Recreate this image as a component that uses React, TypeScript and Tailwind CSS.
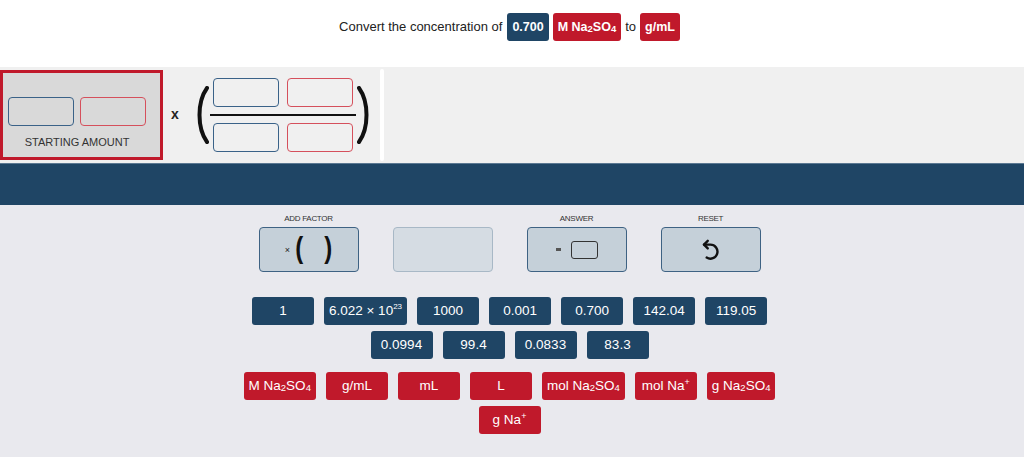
import type { ReactNode } from "react";

const font = { fontFamily: '"Liberation Sans", Arial, sans-serif' };

function Na2SO4({ prefix }: { prefix: string }) {
  return (
    <>
      {prefix} Na<sub className="text-[9.5px]">2</sub>SO<sub className="text-[9.5px]">4</sub>
    </>
  );
}

function NaPlus({ prefix }: { prefix: string }) {
  return (
    <>
      {prefix} Na<sup className="text-[9px]">+</sup>
    </>
  );
}

const numbers: ReactNode[][] = [
  [
    "1",
    <>
      6.022 × 10<sup className="text-[8px]">23</sup>
    </>,
    "1000",
    "0.001",
    "0.700",
    "142.04",
    "119.05",
  ],
  ["0.0994", "99.4", "0.0833", "83.3"],
];

const units: ReactNode[][] = [
  [
    <Na2SO4 prefix="M" />,
    "g/mL",
    "mL",
    "L",
    <Na2SO4 prefix="mol" />,
    <NaPlus prefix="mol" />,
    <Na2SO4 prefix="g" />,
  ],
  [<NaPlus prefix="g" />],
];

function Slot({ red }: { red?: boolean }) {
  return (
    <div
      className={`w-[66px] h-[29px] rounded-[4px] border ${
        red ? "border-[#d5505c]" : "border-[#3a6288]"
      }`}
    />
  );
}

function Paren({ flip }: { flip?: boolean }) {
  return (
    <svg width="13" height="58" viewBox="0 0 13 58" className={flip ? "-scale-x-100" : ""}>
      <path d="M11 2 C1 16 1 42 11 56" stroke="#111" strokeWidth="4" fill="none" strokeLinecap="round" />
    </svg>
  );
}

function Chip({ children, red }: { children: ReactNode; red?: boolean }) {
  return (
    <div
      className={`min-w-[62px] h-[28px] px-[5px] rounded-[3px] flex items-center justify-center text-white text-[13.5px] whitespace-nowrap ${
        red ? "bg-[#c0192b]" : "bg-[#1f4565]"
      }`}
    >
      {children}
    </div>
  );
}

function ActionButton({ label, children, disabled }: { label?: string; children?: ReactNode; disabled?: boolean }) {
  return (
    <div className="w-[100px] flex flex-col items-center">
      <div className="h-[9px] text-[8px] leading-[9px] text-[#333] uppercase tracking-[-0.3px]">{label}</div>
      <div
        className={`mt-[4px] w-[100px] h-[45px] rounded-[4px] border flex items-center justify-center ${
          disabled ? "bg-[#d5dce3] border-[#a8b8c6]" : "bg-[#c5d0d9] border-[#3e6283]"
        }`}
      >
        {children}
      </div>
    </div>
  );
}

export default function App() {
  return (
    <div className="w-[1024px] h-[457px] bg-[#e9e9ee] overflow-hidden" style={font}>
      {/* prompt */}
      <div className="h-[67px] bg-white flex justify-center pt-[13px] pr-[5px]">
        <div className="flex items-center gap-[4px] h-[28px] text-[13px] text-[#222]">
          <span className="mr-[1px]">Convert the concentration of</span>
          <span className="h-[28px] px-[5px] rounded-[3px] bg-[#1f4565] text-white font-bold text-[12.5px] flex items-center">0.700</span>
          <span className="h-[28px] px-[5px] rounded-[3px] bg-[#c0192b] text-white font-bold text-[12.5px] flex items-center">
            <Na2SO4 prefix="M" />
          </span>
          <span>to</span>
          <span className="h-[28px] px-[5px] rounded-[3px] bg-[#c0192b] text-white font-bold text-[12.5px] flex items-center">g/mL</span>
        </div>
      </div>

      {/* workspace */}
      <div className="h-[96px] bg-[#f0f0f0] flex items-start">
        <div className="mt-[3px] w-[163px] h-[90px] border-[3px] border-[#c0192b] bg-[#d9d9d9] flex flex-col items-center pl-[1px] pr-[10px]">
          <div className="mt-[24px] flex gap-[6px]">
            <Slot />
            <Slot red />
          </div>
          <div className="mt-[8px] text-[11px] text-[#333]">STARTING AMOUNT</div>
        </div>
        <div className="ml-[8px] mt-[37px] text-[14px] font-bold text-[#222]">x</div>
        <div className="ml-[17px] flex items-center h-[96px]">
          <Paren />
          <div className="flex flex-col items-center mx-[1px]">
            <div className="flex gap-[8px]">
              <Slot />
              <Slot red />
            </div>
            <div className="my-[7px] w-[146px] h-[2px] bg-[#111]" />
            <div className="flex gap-[8px]">
              <Slot />
              <Slot red />
            </div>
          </div>
          <Paren flip />
        </div>
        <div className="ml-[10px] mt-[2px] w-[4px] h-[92px] bg-white rounded-[2px]" />
      </div>

      {/* band */}
      <div className="h-[42px] bg-[#1f4565] border-t border-[#5b7892]" />

      {/* controls */}
      <div className="pt-[9px] pr-[5px] flex flex-col items-center">
        <div className="flex gap-[34px]">
          <ActionButton label="Add factor">
            <span className="text-[9px] text-[#222] mr-[5px] mt-[3px]">×</span>
            <span className="text-[24px] leading-none font-bold text-[#111] -mt-[3px] [transform:scaleY(1.2)]">(</span>
            <span className="w-[21px]" />
            <span className="text-[24px] leading-none font-bold text-[#111] -mt-[3px] [transform:scaleY(1.2)]">)</span>
          </ActionButton>
          <ActionButton disabled />
          <ActionButton label="Answer">
            <span className="w-[5px] h-[3px] bg-[#555] mr-[10px]" />
            <span className="w-[27px] h-[18px] rounded-[3px] border border-[#333]" />
          </ActionButton>
          <ActionButton label="Reset">
            <svg width="26" height="26" viewBox="0 0 24 24" fill="none" stroke="#111" strokeWidth="2.2" strokeLinecap="round" strokeLinejoin="round">
              <path d="M5.5 7 h6 a6.5 6.5 0 1 1 -3.5 12" />
              <path d="M9 3.5 L5.5 7 L9 10.5" />
            </svg>
          </ActionButton>
        </div>

        <div className="mt-[25px] flex flex-col items-center gap-[6px]">
          {numbers.map((row, i) => (
            <div key={i} className="flex justify-center gap-[10px]">
              {row.map((n, j) => (
                <Chip key={j}>{n}</Chip>
              ))}
            </div>
          ))}
        </div>

        <div className="mt-[13px] flex flex-col items-center gap-[6px]">
          {units.map((row, i) => (
            <div key={i} className="flex justify-center gap-[10px]">
              {row.map((u, j) => (
                <Chip key={j} red>
                  {u}
                </Chip>
              ))}
            </div>
          ))}
        </div>
      </div>
    </div>
  );
}
